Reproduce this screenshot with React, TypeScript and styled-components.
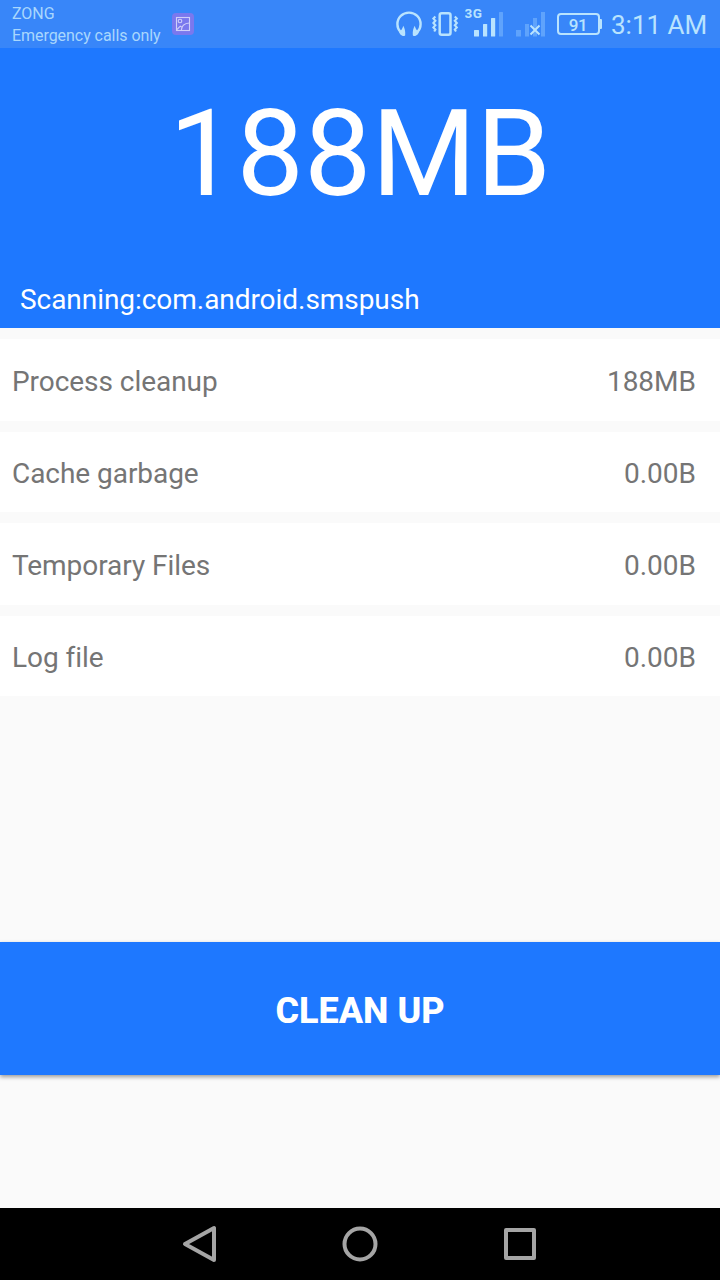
import React from 'react';
import styled, { createGlobalStyle } from 'styled-components';

const GlobalStyle = createGlobalStyle`
  * { box-sizing: border-box; }
  body {
    margin: 0;
    background: #fafafa;
    font-family: Roboto, "Liberation Sans", sans-serif;
  }
`;

const ICON = '#b9e3fe';
const FAINT = '#5fa3fc';

const Screen = styled.div`
  display: flex;
  flex-direction: column;
  width: 720px;
  height: 1280px;
  overflow: hidden;
  background: #fafafa;
`;

const StatusBar = styled.header`
  display: flex;
  align-items: center;
  flex: none;
  height: 48px;
  padding: 0 12px;
  background: #3886f9;
  color: #a9d7fd;
`;

const Carrier = styled.div`
  width: 160px;
  padding-top: 2px;
  font-size: 16px;
  line-height: 22px;
  letter-spacing: -0.05px;
  white-space: nowrap;
`;

const StatusIcons = styled.div`
  display: flex;
  align-items: center;
  margin-left: auto;
`;

const StatusIcon = styled.svg<{ $gap?: number }>`
  display: block;
  flex: none;
  margin-right: ${({ $gap = 0 }) => $gap}px;
`;

const Battery = styled.div`
  display: flex;
  align-items: center;
  margin-right: 9px;
`;

const BatteryBody = styled.div`
  display: flex;
  align-items: center;
  justify-content: center;
  width: 43px;
  height: 22px;
  border: 2px solid ${ICON};
  border-radius: 4px;
  color: ${ICON};
  font-size: 17px;
  font-weight: 500;
  line-height: 20px;
  padding: 1px 1px 0 0;
  letter-spacing: -0.3px;
`;

const BatteryTip = styled.div`
  width: 2px;
  height: 10px;
  background: ${ICON};
  border-radius: 0 1px 1px 0;
`;

const Clock = styled.div`
  width: 97px;
  padding-top: 2px;
  color: ${ICON};
  font-size: 26px;
  line-height: 30px;
  white-space: nowrap;
`;

const Summary = styled.section`
  display: flex;
  flex-direction: column;
  justify-content: space-between;
  flex: none;
  height: 280px;
  padding: 34px 20px 12px;
  background: #1e78ff;
  color: #fff;
`;

const Total = styled.div`
  font-size: 120px;
  line-height: 144px;
  text-align: center;
`;

const ScanStatus = styled.div`
  font-size: 28px;
  line-height: 32px;
  letter-spacing: -0.05px;
`;

const List = styled.ul`
  display: flex;
  flex-direction: column;
  gap: 11px;
  flex: 1;
  margin: 0;
  padding: 11px 0 0;
  list-style: none;
`;

const Row = styled.li`
  display: flex;
  justify-content: space-between;
  align-items: center;
  height: 82px;
  padding: 3px 24px 0 12px;
  background: #fff;
  color: #757575;
  font-size: 28px;
  line-height: 34px;

  &:nth-child(even) {
    height: 80px;
  }
`;

const ItemName = styled.span`
  letter-spacing: -0.05px;
`;

const ItemSize = styled.span``;

const CleanButton = styled.button`
  flex: none;
  height: 133px;
  margin: 0 0 133px;
  padding: 5px 0 0;
  border: 0;
  background: #1e78ff;
  box-shadow: 0 2px 4px rgba(0, 0, 0, 0.38);
  color: #fff;
  font-family: inherit;
  font-size: 36px;
  font-weight: 800;
  line-height: 42px;
`;

const NavBar = styled.nav`
  display: flex;
  align-items: center;
  justify-content: center;
  gap: 120px;
  flex: none;
  height: 72px;
  background: #000;
`;

const NavIcon = styled.svg`
  display: block;
  width: 40px;
  height: 40px;
  fill: none;
  stroke: #a5a5a5;
  stroke-width: 4;
  stroke-linejoin: round;
`;

const items = [
  { name: 'Process cleanup', size: '188MB' },
  { name: 'Cache garbage', size: '0.00B' },
  { name: 'Temporary Files', size: '0.00B' },
  { name: 'Log file', size: '0.00B' },
];

const GalleryIcon = () => (
  <StatusIcon width="24" height="24" viewBox="0 0 24 24" fill="none" stroke="#cfcffa" strokeWidth="1.1">
    <rect x="0" y="1" width="22" height="22" rx="4" fill="#7a78ee" stroke="none" />
    <rect x="4.5" y="5.5" width="13" height="13" />
    <circle cx="8" cy="9" r="1.8" />
    <path d="M5 17.5 8.3 14.2l2.2 1.2M9.3 18.3c.2-4 3-7 8-7.3" />
  </StatusIcon>
);

const HeadphonesIcon = () => (
  <StatusIcon $gap={8} width="28" height="30" viewBox="0 0 28 30">
    <path d="M5.6 23C3.2 20.6 2.4 18 2.4 15.2 2.4 8.4 7.6 3.6 14 3.6s11.6 4.8 11.6 11.6c0 2.8-.8 5.4-3.2 7.8" fill="none" stroke={ICON} strokeWidth="2.4" />
    <path d="M8.2 16.8c1.6 2.4 2.3 5.6 2 9.2-.1 1-1.3 1.3-2.4.9-2-.7-3.2-2.2-3.8-4 2.2-1.1 3.6-3.2 4.2-6.1ZM19.8 16.8c-1.6 2.4-2.3 5.6-2 9.2.1 1 1.3 1.3 2.4.9 2-.7 3.2-2.2 3.8-4-2.2-1.1-3.6-3.2-4.2-6.1Z" fill={ICON} />
  </StatusIcon>
);

const VibrateIcon = () => (
  <StatusIcon $gap={6} width="28" height="30" viewBox="0 0 28 30" fill="none" stroke={ICON}>
    <rect x="8.7" y="4.2" width="10.8" height="21.6" rx="2" strokeWidth="2.5" />
    <path d="M4.4 7.5 2.4 9.6l2 2.2-2 2.2 2 2.2-2 2.2 2 2.2-1.2 1.9M23.8 7.5l2 2.1-2 2.2 2 2.2-2 2.2 2 2.2-2 2.2 1.2 1.9" strokeWidth="2.1" />
  </StatusIcon>
);

const SignalIcon = () => (
  <StatusIcon $gap={12} width="39" height="40" viewBox="0 0 39 40" fill={ICON}>
    <text x="-0.5" y="13.8" fontSize="13.5" fontWeight="700" textLength="17.5">3G</text>
    <rect x="9" y="26" width="5" height="6.5" rx="0.5" />
    <rect x="18" y="20" width="4.2" height="12.5" rx="0.5" />
    <rect x="26" y="14" width="4.2" height="18.5" rx="0.5" />
    <rect x="34" y="8" width="4" height="24.5" rx="0.5" fill={FAINT} />
  </StatusIcon>
);

const NoServiceIcon = () => (
  <StatusIcon $gap={12} width="29" height="40" viewBox="0 0 29 40" fill={FAINT}>
    <rect x="0" y="26" width="5" height="6.5" />
    <rect x="9" y="20" width="4" height="12.5" />
    <rect x="17" y="14" width="4" height="18.5" />
    <rect x="25" y="8" width="4" height="24.5" />
    <path d="m14.5 21.5 9 9m0-9-9 9" stroke={ICON} strokeWidth="2" />
  </StatusIcon>
);

export default function App() {
  return (
    <>
      <GlobalStyle />
      <Screen>
        <StatusBar>
          <Carrier>
            <div>ZONG</div>
            <div>Emergency calls only</div>
          </Carrier>
          <GalleryIcon />
          <StatusIcons>
            <HeadphonesIcon />
            <VibrateIcon />
            <SignalIcon />
            <NoServiceIcon />
            <Battery>
              <BatteryBody>91</BatteryBody>
              <BatteryTip />
            </Battery>
            <Clock>3:11 AM</Clock>
          </StatusIcons>
        </StatusBar>
        <Summary>
          <Total>188MB</Total>
          <ScanStatus>Scanning:com.android.smspush</ScanStatus>
        </Summary>
        <List>
          {items.map((item) => (
            <Row key={item.name}>
              <ItemName>{item.name}</ItemName>
              <ItemSize>{item.size}</ItemSize>
            </Row>
          ))}
        </List>
        <CleanButton>CLEAN UP</CleanButton>
        <NavBar>
          <NavIcon viewBox="0 0 40 40">
            <path d="M34 4v32L5 20Z" />
          </NavIcon>
          <NavIcon viewBox="0 0 40 40">
            <circle cx="20" cy="20" r="15.5" />
          </NavIcon>
          <NavIcon viewBox="0 0 40 40">
            <rect x="6" y="6" width="28" height="28" />
          </NavIcon>
        </NavBar>
      </Screen>
    </>
  );
}
